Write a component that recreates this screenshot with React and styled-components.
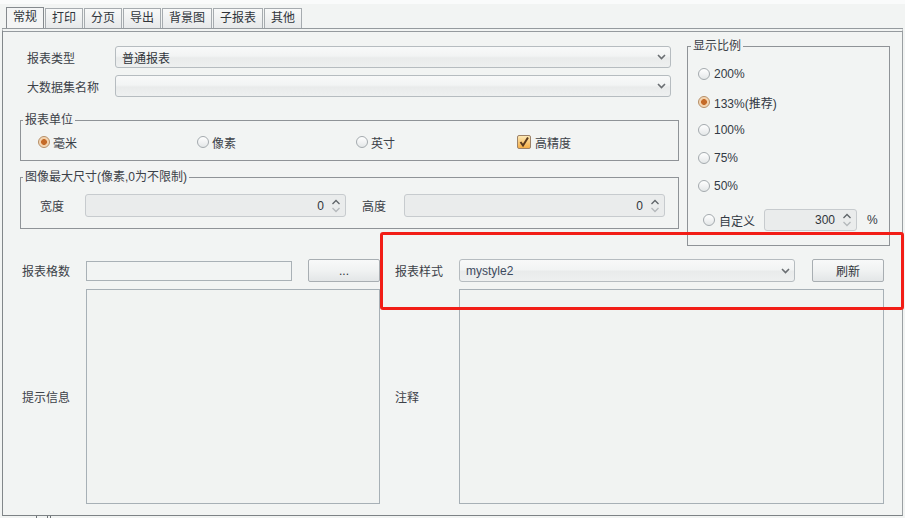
import styled, { createGlobalStyle } from "styled-components";

const GlobalStyle = createGlobalStyle`
  html, body {
    margin: 0;
    padding: 0;
    background: #f2f4f3;
  }
  body {
    font-family: "Liberation Sans", "Noto Sans CJK SC", sans-serif;
    font-size: 12px;
    color: #3c4148;
  }
  * { box-sizing: border-box; }
`;

const tabs = ["常规", "打印", "分页", "导出", "背景图", "子报表", "其他"];
const scales = ["200%", "133%(推荐)", "100%", "75%", "50%"];

const Chevron = () => (
  <svg width="9" height="6" viewBox="0 0 9 6">
    <polyline points="1,1 4.5,4.5 8,1" fill="none" stroke="#6a6e72" strokeWidth="1.6" />
  </svg>
);

const SpinArrows = () => (
  <svg width="10" height="16" viewBox="0 0 10 16">
    <polyline points="1.5,6 5,2.5 8.5,6" fill="none" stroke="#5f6468" strokeWidth="1.3" />
    <polyline points="1.5,10 5,13.5 8.5,10" fill="none" stroke="#b4b8bb" strokeWidth="1.3" />
  </svg>
);

const Check = () => (
  <svg width="12" height="12" viewBox="0 0 12 12">
    <polyline points="2.5,6 5,9.5 10,1.5" fill="none" stroke="#5b3a1e" strokeWidth="2" />
  </svg>
);

const App = () => {
  return (
    <Page>
      <GlobalStyle />
      <TabBar>
        {tabs.map((t, i) => (
          <Tab key={t} $active={i === 0}>
            {t}
          </Tab>
        ))}
      </TabBar>
      <Panel>
        <TopGrid>
          <LeftCol>
            <FormRow>
              <Label $w={88}>报表类型</Label>
              <Combo $w={556}>
                <span>普通报表</span>
                <Chevron />
              </Combo>
            </FormRow>
            <FormRow>
              <Label $w={88}>大数据集名称</Label>
              <Combo $w={556}>
                <span />
                <Chevron />
              </Combo>
            </FormRow>
            <Group $mt={9}>
              <legend>报表单位</legend>
              <UnitRow>
                <Option>
                  <Radio $on />
                  毫米
                </Option>
                <Option>
                  <Radio />
                  像素
                </Option>
                <Option>
                  <Radio />
                  英寸
                </Option>
                <Option>
                  <CheckBox>
                    <Check />
                  </CheckBox>
                  高精度
                </Option>
              </UnitRow>
            </Group>
            <Group $mt={9} $pt={10} $pb={11}>
              <legend>图像最大尺寸(像素,0为不限制)</legend>
              <SizeRow>
                <Label $w={45}>宽度</Label>
                <Spinner $w={261}>
                  <span>0</span>
                  <SpinArrows />
                </Spinner>
                <Label $w={42} $ml={16}>
                  高度
                </Label>
                <Spinner $w={261}>
                  <span>0</span>
                  <SpinArrows />
                </Spinner>
              </SizeRow>
            </Group>
          </LeftCol>
          <ScaleGroup>
            <legend>显示比例</legend>
            {scales.map((s, i) => (
              <ScaleItem key={s}>
                <Radio $on={i === 1} />
                {s}
              </ScaleItem>
            ))}
            <CustomRow>
              <Radio />
              <span>自定义</span>
              <Spinner $w={93} $h={22}>
                <span>300</span>
                <SpinArrows />
              </Spinner>
              <span>%</span>
            </CustomRow>
          </ScaleGroup>
        </TopGrid>

        <BottomGrid>
          <Label $pl={2}>报表格数</Label>
          <Split>
            <Field />
            <Button>...</Button>
          </Split>
          <Label $pl={15}>报表样式</Label>
          <Split>
            <Combo $w={336} $h={23}>
              <StyleName>mystyle2</StyleName>
              <Chevron />
            </Combo>
            <Button>刷新</Button>
          </Split>
          <Label $pl={2}>提示信息</Label>
          <TextArea />
          <Label $pl={15}>注释</Label>
          <TextArea />
        </BottomGrid>

        <Highlight />
      </Panel>
      <Footer>
        <Tick />
        <Tick $ml={10} />
        <Tick $ml={2} />
      </Footer>
    </Page>
  );
};

// Styled components
const Page = styled.div`
  width: 905px;
  height: 518px;
  overflow: hidden;
  border-top: 4px solid #fafbfb;
  padding-top: 3px;
`;

const TabBar = styled.div`
  display: flex;
  align-items: flex-end;
  gap: 1px;
  height: 21px;
  padding-left: 6px;
`;

const Tab = styled.div`
  height: ${(p) => (p.$active ? "21px" : "20px")};
  padding: 0 6px;
  line-height: 19px;
  border: 1px solid ${(p) => (p.$active ? "#858a8e" : "#a6abaf")};
  border-bottom: none;
  background: ${(p) =>
    p.$active ? "#f4f5f5" : "linear-gradient(to bottom, #f8f9f9, #e7e9ea)"};
  color: #30353b;
`;

const Panel = styled.div`
  position: relative;
  margin-left: 2px;
  width: 901px;
  border-top: 4px double #959a9e;
  border-left: 1px solid #82878a;
  border-right: 1px solid #9a9fa2;
  border-bottom: 1px solid #7d8285;
  padding: 7px 0 11px 17px;
`;

const TopGrid = styled.div`
  display: grid;
  grid-template-columns: 659px 203px;
  column-gap: 8px;
  align-items: start;
`;

const LeftCol = styled.div`
  display: flex;
  flex-direction: column;
  padding-top: 7px;
`;

const FormRow = styled.div`
  display: flex;
  align-items: center;
  height: 22px;
  padding-left: 7px;
  margin-bottom: 7px;
`;

const Label = styled.div`
  display: flex;
  align-items: center;
  flex: 0 0 auto;
  width: ${(p) => (p.$w ? `${p.$w}px` : "auto")};
  margin-left: ${(p) => p.$ml || 0}px;
  padding-left: ${(p) => p.$pl || 0}px;
  color: #3c4148;
  white-space: nowrap;
`;

const Combo = styled.div`
  display: flex;
  align-items: center;
  justify-content: space-between;
  width: ${(p) => p.$w}px;
  height: ${(p) => p.$h || 22}px;
  padding: 0 4px 0 6px;
  border: 1px solid #b6bcc0;
  border-radius: 3px;
  background: linear-gradient(
    to bottom,
    #f8f9f9 0%,
    #f2f4f4 45%,
    #e9ebeb 55%,
    #eef0f0 100%
  );
  color: #30353b;
`;

const StyleName = styled.span`
  color: #3d4a5e;
`;

const Group = styled.fieldset`
  margin: ${(p) => p.$mt || 0}px 0 0 0;
  padding: ${(p) => p.$pt || 5}px 0 ${(p) => p.$pb || 8}px 0;
  min-width: 0;
  border: 1px solid #8f9397;

  legend {
    margin-left: 2px;
    padding: 0 2px;
    font-size: 12px;
    line-height: 14px;
    color: #3c4148;
  }
`;

const UnitRow = styled.div`
  display: grid;
  grid-template-columns: 159px 159px 161px auto;
  align-items: center;
  height: 20px;
  padding-left: 17px;
`;

const Option = styled.div`
  display: flex;
  align-items: center;
  gap: 3px;
`;

const Radio = styled.span`
  flex: 0 0 12px;
  width: 12px;
  height: 12px;
  border-radius: 50%;
  border: 1px solid ${(p) => (p.$on ? "#b68d64" : "#a4aaae")};
  background: ${(p) =>
    p.$on
      ? "radial-gradient(circle, #c46a28 0 2.6px, #f3cfa6 3.2px, #f6e7d6 100%)"
      : "linear-gradient(to bottom, #ffffff, #e4e7e8)"};
`;

const CheckBox = styled.span`
  display: flex;
  align-items: center;
  justify-content: center;
  width: 14px;
  height: 14px;
  margin-right: 1px;
  border: 1px solid #9d8268;
  border-radius: 2px;
  background: linear-gradient(to bottom, #fde8b4, #f5ad45);
`;

const SizeRow = styled.div`
  display: flex;
  align-items: center;
  padding-left: 19px;
`;

const Spinner = styled.div`
  display: flex;
  align-items: center;
  justify-content: flex-end;
  gap: 7px;
  width: ${(p) => p.$w}px;
  height: ${(p) => p.$h || 23}px;
  padding-right: 4px;
  border: 1px solid #c7cbce;
  border-radius: 3px;
  background: #eaecec;
  color: #30353b;
`;

const ScaleGroup = styled(Group)`
  padding: 11px 0 14px 0;
  display: flex;
  flex-direction: column;
  gap: 8px;

  legend {
    margin-left: 3px;
  }
`;

const ScaleItem = styled.div`
  display: flex;
  align-items: center;
  gap: 4px;
  height: 20px;
  padding-left: 10px;
  color: #333a44;
`;

const CustomRow = styled.div`
  display: flex;
  align-items: center;
  height: 22px;
  margin-top: 5px;
  padding-left: 15px;
  color: #333a44;

  & > span:nth-child(2) {
    margin-left: 4px;
    width: 45px;
  }
  & > span:last-child {
    margin-left: 10px;
  }
`;

const BottomGrid = styled.div`
  display: grid;
  grid-template-columns: 66px 294px 79px 425px;
  grid-template-rows: 23px 215px;
  row-gap: 7px;
  margin-top: 13px;
`;

const Split = styled.div`
  display: flex;
  align-items: center;
  justify-content: space-between;
`;

const Field = styled.div`
  width: 206px;
  height: 20px;
  border: 1px solid #a9b1b6;
  background: #f2f4f3;
`;

const Button = styled.div`
  display: flex;
  align-items: center;
  justify-content: center;
  width: 72px;
  height: 23px;
  border: 1px solid #a8aeb2;
  border-radius: 2px;
  background: linear-gradient(to bottom, #f8f9f9 0%, #f0f2f2 50%, #e3e6e7 100%);
  color: #30353b;
`;

const TextArea = styled.div`
  border: 1px solid #a7b0b6;
  background: #f1f3f2;
`;

const Highlight = styled.div`
  position: absolute;
  left: 377px;
  top: 200px;
  width: 524px;
  height: 78px;
  border: 3px solid #f21d16;
  border-radius: 3px;
  pointer-events: none;
`;

const Footer = styled.div`
  display: flex;
  height: 2px;
  padding-left: 36px;
`;

const Tick = styled.span`
  width: 1px;
  height: 2px;
  margin-left: ${(p) => p.$ml || 0}px;
  background: #6d7276;
`;

export default App;
